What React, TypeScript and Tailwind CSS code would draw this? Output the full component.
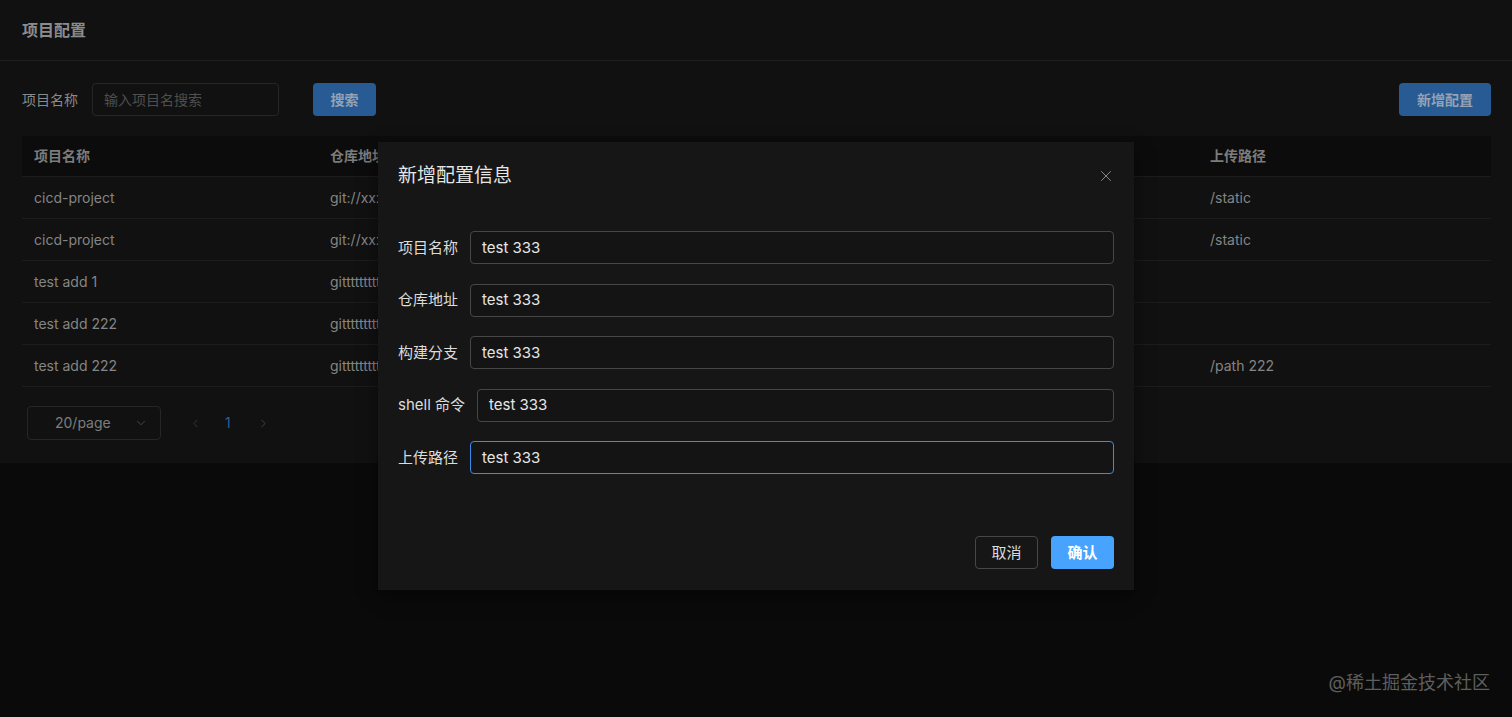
import { X, ChevronDown, ChevronLeft, ChevronRight } from 'lucide-react';

const rows = [
  { name: 'cicd-project', repo: 'git://xxx', path: '/static' },
  { name: 'cicd-project', repo: 'git://xxx', path: '/static' },
  { name: 'test add 1', repo: 'gittttttttt', path: '' },
  { name: 'test add 222', repo: 'gittttttttt', path: '' },
  { name: 'test add 222', repo: 'gittttttttt', path: '/path 222' },
];

const fields = ['项目名称', '仓库地址', '构建分支', 'shell 命令', '上传路径'];

export default function App() {
  return (
    <div
      className="relative min-h-[717px] w-full overflow-hidden bg-[#0a0a0a] text-sm"
      style={{ fontFamily: 'Inter, "Noto Sans CJK SC", sans-serif' }}
    >
      {/* Page (dimmed under mask) */}
      <div className="bg-[#111111] pb-[23px]">
        <div className="flex h-[61px] items-center border-b border-[#1f1f1f] px-[22px]">
          <h2 className="text-base font-bold text-[#8c8c8c]">项目配置</h2>
        </div>

        <div className="px-[21px]">
          {/* Search bar */}
          <div className="mt-[22px] flex items-center">
            <span className="ml-px text-[#8a8a8a]">项目名称</span>
            <div className="ml-[14px] flex h-[33px] w-[187px] items-center rounded border border-[#262626] px-[11px] text-[#4f4f4f]">
              输入项目名搜索
            </div>
            <button className="ml-[34px] h-[33px] w-[63px] rounded bg-[#285b94] font-semibold text-[#96a2b2]">搜索</button>
            <button className="ml-auto h-[33px] w-[92px] rounded bg-[#285b94] font-semibold text-[#96a2b2]">新增配置</button>
          </div>

          {/* Table */}
          <div className="mt-[20px] ml-px">
            <div className="grid h-[41px] grid-cols-[296px_296px_296px_288px_1fr] items-center border-b border-[#1c1c1c] bg-[#0c0c0c] font-semibold text-[#7c7c7c]">
              <span className="pl-3">项目名称</span>
              <span className="pl-3">仓库地址</span>
              <span className="pl-3">构建分支</span>
              <span className="pl-3">shell 命令</span>
              <span className="pl-3">上传路径</span>
            </div>
            {rows.map((r, i) => (
              <div
                key={i}
                className="grid h-[42px] grid-cols-[296px_296px_296px_288px_1fr] items-center border-b border-[#1c1c1c] text-[#858585]"
              >
                <span className="pl-3">{r.name}</span>
                <span className="pl-3">{r.repo}</span>
                <span className="pl-3">master</span>
                <span className="pl-3">npm run build</span>
                <span className="pl-3">{r.path}</span>
              </div>
            ))}
          </div>

          {/* Pagination */}
          <div className="mt-[19px] flex items-center">
            <div className="ml-[6px] flex h-[34px] w-[134px] items-center justify-between rounded border border-[#262626] pl-[27px] pr-[12px] text-[#7d7d7d]">
              <span>20/page</span>
              <ChevronDown size={14} strokeWidth={1.5} className="text-[#4d4d4d]" />
            </div>
            <ChevronLeft size={13} strokeWidth={1.5} className="ml-[28px] text-[#3d3d3d]" />
            <span className="ml-[23px] text-[#2c5f99]">1</span>
            <ChevronRight size={13} strokeWidth={1.5} className="ml-[26px] text-[#4d4d4d]" />
          </div>
        </div>
      </div>

      {/* Modal */}
      <div className="absolute inset-x-0 top-[142px] flex justify-center">
        <div className="w-[756px] bg-[#161616] px-5 pb-[21px] shadow-[0_6px_16px_rgba(0,0,0,0.5)]">
          <div className="flex h-[67px] items-center justify-between">
            <h3 className="text-[19px] text-[#e6e6e6]">新增配置信息</h3>
            <X size={18} strokeWidth={1.3} className="-mr-[1px] text-[#8c8c8c]" />
          </div>
          <div className="mt-[22px] flex flex-col gap-[19.5px]">
            {fields.map((f, i) => (
              <div key={f} className="flex items-center">
                <label className="mr-[12px] text-[15px] text-[#dcdcdc]">{f}</label>
                <div
                  className={
                    i === 4
                      ? 'flex h-[33px] flex-1 items-center rounded border border-[#3c89e8] bg-[#141414] px-[11px] text-[15px] text-[#e6e6e6]'
                      : 'flex h-[33px] flex-1 items-center rounded border border-[#474747] bg-[#141414] px-[11px] text-[15px] text-[#e6e6e6]'
                  }
                >
                  test 333
                </div>
              </div>
            ))}
          </div>
          <div className="mt-[62px] flex justify-end gap-[13px]">
            <button className="h-[33px] w-[63px] rounded border border-[#474747] text-[15px] text-[#dcdcdc]">取消</button>
            <button className="h-[33px] w-[63px] rounded bg-[#48a3ff] text-[15px] font-semibold text-white">确认</button>
          </div>
        </div>
      </div>

      {/* Watermark */}
      <div className="absolute bottom-[20px] right-[22px] text-lg text-[#5e5e5e]">@稀土掘金技术社区</div>
    </div>
  );
}
